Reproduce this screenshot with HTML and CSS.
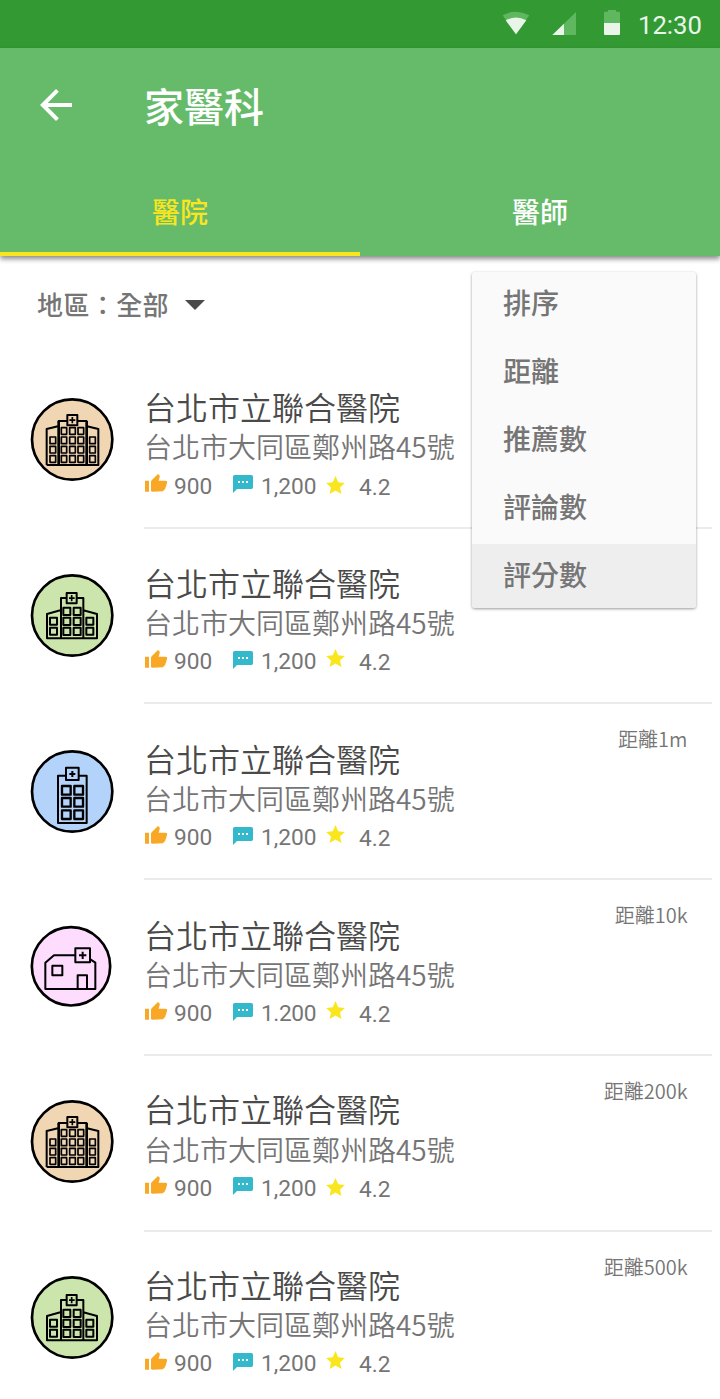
FILE: index.html
```html
<!DOCTYPE html>
<html lang="zh-Hant">
<head>
<meta charset="utf-8">
<title>家醫科</title>
<link rel="stylesheet" href="styles.css">
</head>
<body>
<svg class="defs" width="0" height="0">
  <defs>
    <symbol id="thumb" viewBox="0 0 66 54"><path fill="#f9a826" d="M0 20h12v33H0zM18 50V24q0-3 2-5L39 0l4 4q2 2 1 5l-3 11h21q5 0 4 6-1 6-5 17-3 8-8 8.500L23 53q-5 0-5-3z"/></symbol>
    <symbol id="chat" viewBox="0 0 60 54"><path fill="#33b8cc" d="M5 0h50q5 0 5 5v32q0 5-5 5H12L0 54V5q0-5 5-5z"/><path fill="#fff" d="M15 18h6v6h-6zM27 18h6v6h-6zM39 18h6v6h-6z"/></symbol>
    <symbol id="star" viewBox="0 0 54 52"><path fill="#f9e61e" d="M27 0l8 18 19 2-14 13 4 19-17-10-17 10 4-19L0 20l19-2z"/></symbol>
    <symbol id="large" viewBox="30 39 252 252">
      <circle cx="156.500" cy="163.500" r="120.500" fill="#f1d6b4" stroke="#000" stroke-width="8"/>
      <g fill="none" stroke="#000" stroke-width="6" stroke-linejoin="round">
        <path d="M80 240V132l34-8M201 124l34 8V240H80M114 108h28M172 108h29M142 90h30v31h-30z"/>
        <path stroke-width="8" d="M116 107V240M200 107V240"/>
        <path stroke-width="5" d="M157 96v19M148 105.500h18"/>
        <path stroke-width="5" d="M124 128h16v20h-16zM149 128h17v20h-17zM174 128h17v20h-17zM124 156h16v20h-16zM149 156h17v20h-17zM174 156h17v20h-17zM124 184h16v20h-16zM149 184h17v20h-17zM174 184h17v20h-17zM124 212h16v20h-16zM149 212h17v20h-17zM174 212h17v20h-17zM90 156h17v20H90zM90 184h17v20H90zM90 212h17v20H90zM209 156h17v20h-17zM209 184h17v20h-17zM209 212h17v20h-17z"/>
      </g>
    </symbol>
    <symbol id="medium" viewBox="30 42 252 252">
      <circle cx="156.500" cy="166.500" r="120.500" fill="#cbe5ad" stroke="#000" stroke-width="8"/>
      <g fill="none" stroke="#000" stroke-width="6" stroke-linejoin="round">
        <path d="M123 235H81V162l40-11M190 151l41 11v73H190M123 235V114h17M170 114h20V235H123M140 99h30v31h-30z"/>
        <path stroke-width="5" d="M155 105v19M147 114.500h17"/>
        <path stroke-width="6" d="M130 143h21v22h-21zM161 143h21v22h-21zM130 173h21v22h-21zM161 173h21v22h-21zM130 203h21v22h-21zM161 203h21v22h-21zM90 173h21v21H90zM90 203h21v21H90zM199 173h21v21h-21zM199 203h21v21h-21z"/>
      </g>
    </symbol>
    <symbol id="tower" viewBox="30 30 252 252">
      <circle cx="156.500" cy="154.500" r="120.500" fill="#b3d3fa" stroke="#000" stroke-width="8"/>
      <g fill="none" stroke="#000" stroke-width="6" stroke-linejoin="round">
        <path d="M138 107H114V249h86V107H176M138 83h38v37h-38zM157 93v18M148 102h18"/>
        <path stroke-width="7" d="M126 138h26v26h-26zM163 138h26v26h-26zM126 174h26v26h-26zM163 174h26v26h-26zM126 211h26v26h-26zM163 211h26v26h-26z"/>
      </g>
    </symbol>
    <symbol id="clinic" viewBox="30 45 252 252">
      <circle cx="153" cy="169" r="117.500" fill="#fddcfd" stroke="#000" stroke-width="8"/>
      <g fill="none" stroke="#000" stroke-width="6" stroke-linejoin="round">
        <path d="M166 136H102L76 158V237H226V158l-15-10"/>
        <path d="M166 115h44v42h-44zM188 125v22M177 136h22M97 167h30v29H97zM173 237V196h28V237"/>
      </g>
    </symbol>
  </defs>
</svg>
<div class="screen">
  <div class="status">
    <svg class="status-icons" width="120" height="24" viewBox="0 0 360 72">
      <path fill="#5fb760" d="M8 10q39-21 80 0L48 67z"/><path fill="#e9f5e9" d="M17 25q31-17 62 0L48 67z"/>
      <path fill="#5fb760" d="M157 69l71-69v69z"/><path fill="#e9f5e9" d="M157 69l35-34v34z"/>
      <path fill="#5fb760" d="M312 33V2q0-3 3-3h9v-5h24v5h9q3 0 3 3v31z"/><path fill="#e9f5e9" d="M312 33h48v33q0 3-3 3h-42q-3 0-3-3z"/>
    </svg>
    <span class="clock">12:30</span>
  </div>
  <header class="appbar">
    <div class="toolbar">
      <svg width="32" height="32" viewBox="0 0 32 32"><path fill="#fff" d="M32 14v4H7.700l11.200 11.200L16 32 0 16 16 0l2.800 2.800L7.700 14z"/></svg>
      <h1>家醫科</h1>
    </div>
    <nav class="tabs"><a class="tab active">醫院</a><a class="tab">醫師</a></nav>
  </header>
  <div class="filter"><span>地區：全部</span><svg width="20" height="10" viewBox="0 0 20 10"><path fill="#4a4a4a" d="M0 0h20L10 10z"/></svg></div>
  <main class="list">
    <article class="row r1"><svg class="avatar"><use href="#large"/></svg><div class="info"><h2>台北市立聯合醫院</h2><p>台北市大同區鄭州路45號</p><div class="stats"><svg class="thumb"><use href="#thumb"/></svg><span class="likes">900</span><svg class="chat"><use href="#chat"/></svg><span class="comments">1,200</span><svg class="star"><use href="#star"/></svg><span class="score">4.2</span></div></div></article>
    <article class="row r2"><svg class="avatar"><use href="#medium"/></svg><div class="info"><h2>台北市立聯合醫院</h2><p>台北市大同區鄭州路45號</p><div class="stats"><svg class="thumb"><use href="#thumb"/></svg><span class="likes">900</span><svg class="chat"><use href="#chat"/></svg><span class="comments">1,200</span><svg class="star"><use href="#star"/></svg><span class="score">4.2</span></div></div></article>
    <article class="row r3"><svg class="avatar"><use href="#tower"/></svg><div class="info"><h2>台北市立聯合醫院</h2><p>台北市大同區鄭州路45號</p><div class="stats"><svg class="thumb"><use href="#thumb"/></svg><span class="likes">900</span><svg class="chat"><use href="#chat"/></svg><span class="comments">1,200</span><svg class="star"><use href="#star"/></svg><span class="score">4.2</span></div></div><span class="distance">距離1m</span></article>
    <article class="row r4"><svg class="avatar"><use href="#clinic"/></svg><div class="info"><h2>台北市立聯合醫院</h2><p>台北市大同區鄭州路45號</p><div class="stats"><svg class="thumb"><use href="#thumb"/></svg><span class="likes">900</span><svg class="chat"><use href="#chat"/></svg><span class="comments">1.200</span><svg class="star"><use href="#star"/></svg><span class="score">4.2</span></div></div><span class="distance">距離10k</span></article>
    <article class="row r5"><svg class="avatar"><use href="#large"/></svg><div class="info"><h2>台北市立聯合醫院</h2><p>台北市大同區鄭州路45號</p><div class="stats"><svg class="thumb"><use href="#thumb"/></svg><span class="likes">900</span><svg class="chat"><use href="#chat"/></svg><span class="comments">1,200</span><svg class="star"><use href="#star"/></svg><span class="score">4.2</span></div></div><span class="distance">距離200k</span></article>
    <article class="row r6"><svg class="avatar"><use href="#medium"/></svg><div class="info"><h2>台北市立聯合醫院</h2><p>台北市大同區鄭州路45號</p><div class="stats"><svg class="thumb"><use href="#thumb"/></svg><span class="likes">900</span><svg class="chat"><use href="#chat"/></svg><span class="comments">1,200</span><svg class="star"><use href="#star"/></svg><span class="score">4.2</span></div></div><span class="distance">距離500k</span></article>
  </main>
  <ul class="menu"><li>排序</li><li>距離</li><li>推薦數</li><li>評論數</li><li class="selected">評分數</li></ul>
</div>
</body>
</html>
```
FILE: styles.css
```css
* { box-sizing: border-box; margin: 0; padding: 0; }
body { background: #fff; font-family: "Noto Sans CJK TC", sans-serif; color: #757575; }
svg { display: block; flex: none; }
.defs { position: absolute; }
.screen { position: relative; width: 720px; height: 1399px; overflow: hidden; }
.status { height: 48px; background: #339933; display: flex; justify-content: flex-end; padding-right: 18px; }
.status-icons { margin: 12px 18px 0 0; overflow: visible; }
.clock { font: 25.7px/50px Roboto, sans-serif; color: #e9f5e9; width: 64px; white-space: nowrap; }
.appbar { position: relative; height: 208px; background: #66bb6a; box-shadow: 0 3px 5px rgba(0,0,0,.45); display: flex; flex-direction: column; justify-content: space-between; }
.toolbar { display: flex; align-items: center; height: 114px; padding-left: 40px; gap: 72px; }
.toolbar h1 { font-size: 40px; font-weight: 500; line-height: 60px; color: #fff; }
.tabs { display: grid; grid-template-columns: 1fr 1fr; height: 84px; }
.tab { text-align: center; font-size: 28px; font-weight: 500; line-height: 78px; color: #fff; border-bottom: 4px solid transparent; }
.tab.active { color: #f9e61e; border-color: #f9e61e; }
.filter { height: 98px; margin-bottom: -2px; display: flex; align-items: center; padding-left: 37px; gap: 16px; font-size: 26px; font-weight: 500; }
.filter span { letter-spacing: .4px; padding-bottom: 4px; }
.row { display: flex; height: 176px; padding-left: 30px; position: relative; }
.avatar { width: 84px; height: 84px; margin: 46px 30px 0 0; }
.info { width: 568px; padding-top: 34px; border-bottom: 2px solid #ebebeb; }
.info h2 { font-size: 32px; font-weight: 350; line-height: 40px; color: #4a4a4a; }
.info p { font-size: 28px; font-weight: 350; line-height: 38px; margin-top: 1px; }
.stats { display: flex; align-items: flex-start; height: 30px; margin-top: 5px; padding-left: 1px; font: 22.7px/30px Roboto, sans-serif; }
.stats span { padding-top: 1px; }
.thumb { width: 22px; height: 18px; margin: 4px 7px 0 0; }
.likes { width: 59px; }
.chat { width: 20px; height: 18px; margin: 5px 8px 0 0; }
.comments { width: 65px; }
.star { width: 19px; height: 18px; margin: 3px 14px 0 0; }
.stats .score { padding-top: 2px; }
.r1 { height: 177px; }
.r1 .star, .r5 .star { margin-top: 6px; }
.r1 .stats span, .r5 .stats span { padding-top: 2px; }
.r1 .stats .score, .r5 .stats .score { padding-top: 3px; }
.r2 { height: 175px; }
.r2 .avatar { margin-top: 45px; }
.r2 .info { padding-top: 33px; }
.r4 .avatar { margin-top: 45px; }
.r4 .comments { letter-spacing: -.4px; }
.r5 .avatar, .r6 .avatar { margin-top: 44px; }
.r5 .info, .r6 .info { padding-top: 32px; }
.r5 .info p { margin-top: 2px; }
.r5 .stats { margin-top: 4px; }
.distance { position: absolute; right: 32.5px; top: 20px; font-size: 20px; font-weight: 350; line-height: 30px; }
.menu { position: absolute; left: 472px; top: 272px; width: 224px; height: 336px; list-style: none; background: #fafafa; border-radius: 3px; box-shadow: 0 1px 3px rgba(0,0,0,.4); overflow: hidden; }
.menu li { height: 68px; padding-left: 31px; font-size: 28px; font-weight: 500; line-height: 61px; }
.menu .selected { height: 64px; background: #eee; }
```
